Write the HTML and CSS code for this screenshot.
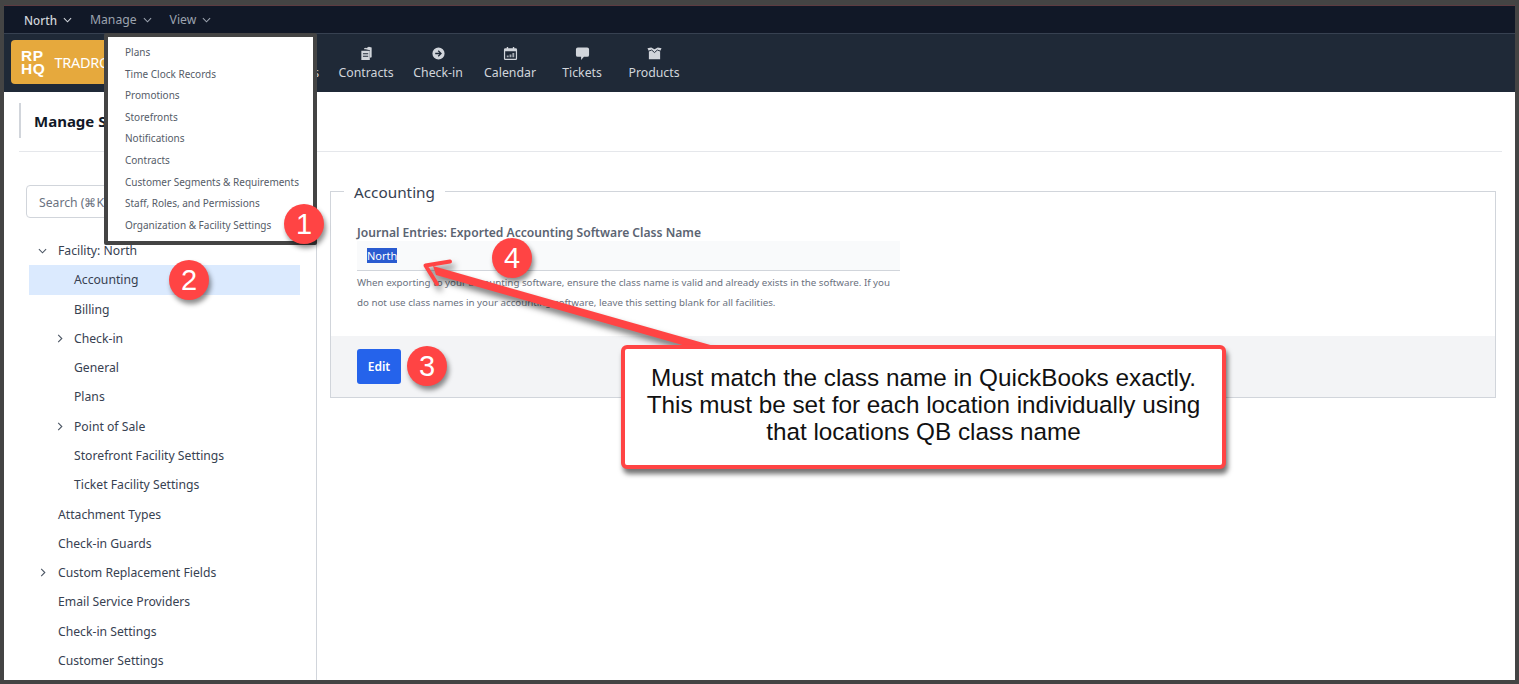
FILE: index.html
```html
<!DOCTYPE html>
<html lang="en">
<head>
<meta charset="utf-8">
<title>Manage Settings</title>
<link rel="stylesheet" href="styles.css">
</head>
<body>
<div class="frame">
  <div class="app">
    <nav class="topbar">
      <span class="top-item top-item-active">North <svg class="chev" viewBox="0 0 10 6"><path d="M1 1l4 4 4-4"/></svg></span>
      <span class="top-item">Manage <svg class="chev" viewBox="0 0 10 6"><path d="M1 1l4 4 4-4"/></svg></span>
      <span class="top-item">View <svg class="chev" viewBox="0 0 10 6"><path d="M1 1l4 4 4-4"/></svg></span>
    </nav>
    <nav class="mainbar">
      <div class="logo"><span class="logo-mark">RP<br>HQ</span><span class="logo-name">TRADROOM</span></div>
      <div class="nav-items">
        <div class="nav-item nav-item-first"><svg class="nav-icon" viewBox="0 0 16 16"><circle cx="8" cy="5" r="3.500"/><path d="M1.500 15c0-4 3-6 6.500-6s6.500 2 6.500 6z"/></svg><span>Customers</span></div>
        <div class="nav-item"><svg class="nav-icon" viewBox="0 0 16 16"><path d="M5.500 3.500V2.300l1.500-.5.500.7 3-1.700 3 .9V12l-1.800.6V4.500L7 3.500z"/><path fill-rule="evenodd" d="M2.500 5h9v10h-9zM4.200 7.600v1.100h5.600V7.600zm0 2.800v1.100h5.600v-1.100z"/></svg><span>Contracts</span></div>
        <div class="nav-item"><svg class="nav-icon" viewBox="0 0 16 16"><path fill-rule="evenodd" d="M8 1.500a6.500 6.500 0 1 1 0 13 6.500 6.500 0 0 1 0-13zM8.200 4.500l-1 1 1.800 1.700H4.500v1.600H9l-1.800 1.700 1 1L11.700 8z"/></svg><span>Check-in</span></div>
        <div class="nav-item"><svg class="nav-icon" viewBox="0 0 16 16"><path fill-rule="evenodd" d="M4 1h1.500v1.500h5V1H12v1.500h1.500A1.500 1.500 0 0 1 15 4v9.500a1.500 1.500 0 0 1-1.500 1.500h-11A1.500 1.500 0 0 1 1 13.500V4a1.500 1.500 0 0 1 1.500-1.500H4zM2.300 5.500v8h11.400v-8z"/><path d="M4 10h2v2H4zm3-1h2v3H7zm3-1.500h2V12h-2z" opacity=".75"/></svg><span>Calendar</span></div>
        <div class="nav-item"><svg class="nav-icon nav-icon-wide" viewBox="0 0 16 16"><path d="M3 1.500h10a2 2 0 0 1 2 2v6a2 2 0 0 1-2 2H9.500L6.500 15v-3.500H3a2 2 0 0 1-2-2v-6a2 2 0 0 1 2-2z"/></svg><span>Tickets</span></div>
        <div class="nav-item"><svg class="nav-icon nav-icon-wide" viewBox="0 0 16 16"><path d="M.5 2.500L4.500 1.500 8 3.500l3.500-2 4 1-1.500 3V14H2V5.500z"/><path class="box-fold" d="M1.500 5.500L5 4.300l3 2.700 3-2.700 3.500 1.200"/></svg><span>Products</span></div>
      </div>
    </nav>
    <header class="page-head">
      <h1 class="page-title">Manage Settings</h1>
    </header>
    <div class="content">
      <aside class="sidebar">
        <div class="search">Search (⌘K)</div>
        <ul class="tree">
          <li class="row lvl0"><svg class="tw" viewBox="0 0 10 6"><path d="M1 1l4 4 4-4"/></svg>Facility: North</li>
          <li class="row lvl1 row-active">Accounting</li>
          <li class="row lvl1">Billing</li>
          <li class="row lvl1"><svg class="tw tw-r" viewBox="0 0 6 10"><path d="M1 1l4 4-4 4"/></svg>Check-in</li>
          <li class="row lvl1">General</li>
          <li class="row lvl1">Plans</li>
          <li class="row lvl1"><svg class="tw tw-r" viewBox="0 0 6 10"><path d="M1 1l4 4-4 4"/></svg>Point of Sale</li>
          <li class="row lvl1">Storefront Facility Settings</li>
          <li class="row lvl1">Ticket Facility Settings</li>
          <li class="row lvl0">Attachment Types</li>
          <li class="row lvl0">Check-in Guards</li>
          <li class="row lvl0"><svg class="tw tw-r" viewBox="0 0 6 10"><path d="M1 1l4 4-4 4"/></svg>Custom Replacement Fields</li>
          <li class="row lvl0">Email Service Providers</li>
          <li class="row lvl0">Check-in Settings</li>
          <li class="row lvl0">Customer Settings</li>
        </ul>
      </aside>
      <main class="main">
        <fieldset class="panel">
          <legend class="panel-legend">Accounting</legend>
          <div class="panel-body">
            <div class="field-label">Journal Entries: Exported Accounting Software Class Name</div>
            <div class="field-value"><span class="selected">North</span></div>
            <p class="field-help">When exporting to your accounting software, ensure the class name is valid and already exists in the software. If you do not use class names in your accounting software, leave this setting blank for all facilities.</p>
          </div>
          <div class="panel-foot"><button class="btn-edit" type="button">Edit</button></div>
        </fieldset>
      </main>
    </div>

    <ul class="dropdown">
      <li>Plans</li>
      <li>Time Clock Records</li>
      <li>Promotions</li>
      <li>Storefronts</li>
      <li>Notifications</li>
      <li>Contracts</li>
      <li>Customer Segments &amp; Requirements</li>
      <li>Staff, Roles, and Permissions</li>
      <li>Organization &amp; Facility Settings</li>
    </ul>

    <svg class="arrow" viewBox="0 0 1519 684" aria-hidden="true">
      <g class="arrow-g">
        <path class="arrow-head" d="M450 261.500L425.500 265.500L437 284"/>
        <path class="arrow-shaft" d="M433 266L436 275L707 352L735 352Z"/>
      </g>
    </svg>

    <div class="callout">Must match the class name in QuickBooks exactly.<br>This must be set for each location individually using<br>that locations QB class name</div>

    <span class="badge badge-1">1</span>
    <span class="badge badge-2">2</span>
    <span class="badge badge-3">3</span>
    <span class="badge badge-4">4</span>
  </div>
</div>
</body>
</html>
```

FILE: styles.css
```css
* { box-sizing: border-box; }

html, body {
  margin: 0;
  height: 684px;
  overflow: hidden;
  background: #fff;
}

body {
  font-family: "Noto Sans", "Open Sans", sans-serif;
  color: #374151;
}

.frame {
  height: 684px;
  border: 4px solid #444444;
  border-top-width: 5px;
}

.app {
  position: relative;
  height: 100%;
  overflow: hidden;
  display: flex;
  flex-direction: column;
  background: #fff;
  border-top: 1px solid #5d3b41;
}

/* top bars */
.topbar {
  height: 28px;
  flex: none;
  display: flex;
  align-items: center;
  gap: 18px;
  padding-left: 20px;
  background: #111827;
  border-bottom: 1px solid #374151;
}

.top-item {
  display: flex;
  align-items: center;
  gap: 6px;
  font-size: 12.200px;
  color: #9ca3af;
}

.top-item-active {
  font-size: 11.700px;
  font-weight: 500;
  color: #d1d5db;
}

.chev {
  width: 9px;
  height: 6px;
  fill: none;
  stroke: currentColor;
  stroke-width: 1.200;
}

.mainbar {
  height: 58px;
  flex: none;
  display: flex;
  align-items: center;
  padding: 0 0 2px 7px;
  background: #1f2937;
}

.logo {
  width: 232px;
  height: 44px;
  flex: none;
  display: flex;
  align-items: center;
  gap: 9px;
  padding-left: 10px;
  background: #e6a93d;
  border-radius: 4px;
  color: #fff;
}

.logo-mark {
  font-family: "Liberation Sans", sans-serif;
  font-size: 15.500px;
  line-height: 13px;
  font-weight: 700;
  letter-spacing: .6px;
}

.logo-name {
  font-size: 14.500px;
  letter-spacing: -.3px;
}

.nav-items {
  display: flex;
  gap: 16px;
  margin: 2px 0 0 13.500px;
}

.nav-item {
  min-width: 56px;
  display: flex;
  flex-direction: column;
  align-items: center;
  gap: 3px;
  font-size: 12.300px;
  line-height: 17px;
  color: #d1d5db;
}

.nav-item-first { margin-right: 3px; }

.nav-icon {
  width: 15px;
  height: 15px;
  fill: #d1d5db;
}

.nav-icon-wide { width: 17px; }

.box-fold {
  fill: none;
  stroke: #1f2937;
  stroke-width: 1;
}

/* page header */
.page-head {
  height: 60px;
  flex: none;
  margin: 0 13px 0 15px;
  padding-top: 11px;
  border-bottom: 1px solid #e5e7eb;
}

.page-title {
  margin: 0;
  height: 35px;
  padding-left: 13px;
  border-left: 2px solid #d1d5db;
  font-size: 15px;
  line-height: 37px;
  font-weight: 700;
  color: #111827;
}

/* layout */
.content {
  flex: 1;
  min-height: 0;
  display: flex;
}

.sidebar {
  width: 313px;
  flex: none;
  padding: 33px 16px 0 25px;
  border-right: 1px solid #d1d5db;
  overflow: hidden;
}

.search {
  width: 200px;
  height: 33px;
  padding-left: 12px;
  margin-left: -3px;
  border: 1px solid #d1d5db;
  border-radius: 4px;
  font-size: 12.200px;
  line-height: 33px;
  color: #6b7280;
}

.tree {
  list-style: none;
  margin: 18px 0 0;
  padding: 0;
}

.row {
  position: relative;
  height: 29.290px;
  font-size: 12.200px;
  line-height: 29.290px;
  color: #374151;
  white-space: nowrap;
}

.lvl0 { padding-left: 29px; }
.lvl1 { padding-left: 45px; }
.row-active { background: #dbeafe; }

.tw {
  position: absolute;
  left: 9px;
  top: 12px;
  width: 9px;
  height: 6px;
  fill: none;
  stroke: #4b5563;
  stroke-width: 1.200;
}

.tw-r { width: 6px; height: 9px; left: 11px; top: 10px; }
.lvl1 .tw-r { left: 28px; }

/* main panel */
.main {
  flex: 1;
  min-width: 0;
  padding: 28px 19px 0 13px;
}

.panel {
  margin: 0;
  padding: 0;
  min-width: 0;
  border: 1px solid #d1d5db;
}

.panel-legend {
  margin-left: 13px;
  padding: 2px 10px 0;
  font-size: 15.300px;
  line-height: 20px;
  color: #374151;
}

.panel-body {
  padding: 22px 26px 0;
  height: 134px;
}

.field-label {
  height: 17px;
  font-size: 12.100px;
  line-height: 18px;
  font-weight: 600;
  color: #5b6472;
}

.field-value {
  width: 543px;
  height: 30px;
  padding-left: 10px;
  background: #f9fafb;
  border-bottom: 1px solid #d1d5db;
  font-size: 11px;
  line-height: 29px;
}

.selected {
  background: #2a5bd0;
  color: #fff;
}

.field-help {
  width: 543px;
  margin: 2px 0 0;
  font-size: 9.750px;
  line-height: 20px;
  color: #6b7280;
}

.panel-foot {
  height: 61px;
  padding: 13px 26px 0;
  background: #f3f4f6;
}

.btn-edit {
  width: 44px;
  height: 35px;
  padding: 0;
  border: 0;
  border-radius: 3px;
  background: #2563eb;
  color: #fff;
  font-family: inherit;
  font-size: 12px;
  font-weight: 600;
}

/* overlays */
.dropdown {
  position: absolute;
  left: 100px;
  top: 27px;
  width: 213px;
  height: 212px;
  margin: 0;
  padding: 5px 0 0 17px;
  list-style: none;
  background: #fff;
  border: 4px solid #444444;
  border-radius: 2px;
}

.dropdown li {
  height: 21.600px;
  font-size: 10px;
  line-height: 21.600px;
  color: #555c68;
  white-space: nowrap;
}

.arrow {
  position: absolute;
  left: -4px;
  top: -6px;
  width: 1519px;
  height: 684px;
  pointer-events: none;
}

.arrow-g { filter: drop-shadow(3px 5px 3px rgba(0, 0, 0, .55)); }

.arrow-shaft { fill: #ff4444; }

.arrow-head {
  fill: none;
  stroke: #ff4444;
  stroke-width: 4;
  stroke-linecap: round;
  stroke-linejoin: round;
}

.callout {
  position: absolute;
  left: 617px;
  top: 339px;
  width: 605px;
  height: 124px;
  padding-top: 15px;
  text-align: center;
  background: #fff;
  border: 4px solid #ff4444;
  border-radius: 6px;
  box-shadow: 2px 5px 5px rgba(0, 0, 0, .55);
  font-family: "Liberation Sans", Arial, sans-serif;
  font-size: 24.300px;
  line-height: 27px;
  color: #111;
}

.badge {
  position: absolute;
  width: 40px;
  height: 40px;
  display: flex;
  align-items: center;
  justify-content: center;
  border-radius: 50%;
  background: #ff4444;
  box-shadow: 2px 4px 5px rgba(0, 0, 0, .45);
  font-family: "Liberation Sans", Arial, sans-serif;
  font-size: 29px;
  color: #fff;
}

.badge-1 { left: 280px; top: 198px; }
.badge-2 { left: 165px; top: 254px; }
.badge-3 { left: 403px; top: 340px; }
.badge-4 { left: 488px; top: 232px; }
```
